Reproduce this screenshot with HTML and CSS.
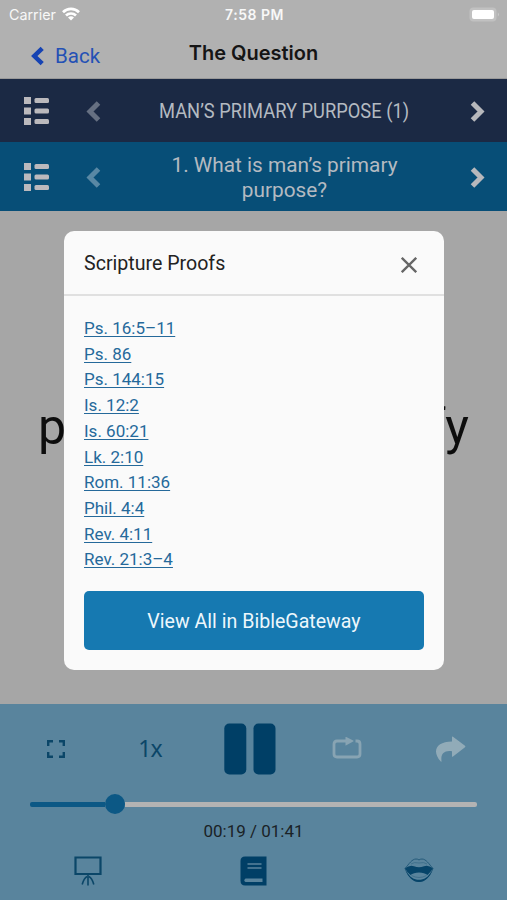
FILE: index.html
```html
<!DOCTYPE html>
<html lang="en">
<head>
    <meta charset="UTF-8">
    <meta name="viewport" content="width=device-width, initial-scale=1.0">
    <title>The Question</title>
    <link rel="stylesheet" href="styles.css">
</head>
<body>
    <div class="app">
        <div class="status-bar">
            <div class="status-left">
                <span>Carrier</span>
                <svg width="18" height="14" viewBox="0 0 18 14" fill="none" stroke="#fff" stroke-width="2.7">
                    <path d="M1 5.2a11.5 11.5 0 0 1 16 0"/>
                    <path d="M4 8.5a7.2 7.2 0 0 1 10 0"/>
                    <path d="M9 13.5L6 10.6a4.3 4.3 0 0 1 6 0z" fill="#fff" stroke="none"/>
                </svg>
            </div>
            <div class="status-time">7:58 PM</div>
            <div class="status-right">
                <svg width="31" height="15" viewBox="0 0 31 15">
                    <rect x="0.5" y="0.5" width="27" height="14" rx="4" fill="#c1c1c1"/>
                    <rect x="3" y="3" width="22" height="9" rx="2" fill="#fff"/>
                    <path d="M28.8 5.5q2.4 2 0 4z" fill="#c8c8c8"/>
                </svg>
            </div>
        </div>

        <header class="header">
            <a href="#" class="back-link">
                <svg width="13" height="20" viewBox="0 0 13 20" fill="none" stroke="#1643b3" stroke-width="4.5"><path d="M11.2 2.3L3.300 10l7.900 7.700"/></svg>
                <span>Back</span>
            </a>
            <h1 class="header-title">The Question</h1>
            <div></div>
        </header>

        <nav class="nav nav-chapter">
            <svg class="list-icon" width="25" height="28" viewBox="0 0 25 28"><use href="#list"/></svg>
            <svg class="arrow arrow-prev" width="16" height="23" viewBox="0 0 16 23"><path d="M12.500 3L4 11.500l8.500 8.500"/></svg>
            <div class="nav-title"><span class="condensed">MAN’S PRIMARY PURPOSE (1)</span></div>
            <svg class="arrow" width="16" height="23" viewBox="0 0 16 23"><path d="M3.500 3l8.500 8.500L3.500 20"/></svg>
        </nav>
        <nav class="nav nav-question">
            <svg class="list-icon" width="25" height="28" viewBox="0 0 25 28"><use href="#list"/></svg>
            <svg class="arrow arrow-prev" width="16" height="23" viewBox="0 0 16 23"><path d="M12.500 3L4 11.500l8.500 8.500"/></svg>
            <div class="nav-title">1. What is man’s primary<br>purpose?</div>
            <svg class="arrow" width="16" height="23" viewBox="0 0 16 23"><path d="M3.500 3l8.500 8.500L3.500 20"/></svg>
        </nav>

        <main class="content">
            <span>p</span><span>fy</span>
        </main>

        <section class="player">
            <div class="controls">
                <div class="control"><svg width="18" height="18" viewBox="0 0 18 18" fill="none" stroke="#0b4668" stroke-width="2.4"><path d="M1.2 6V1.2H6M12 1.2h4.8V6M16.8 12v4.8H12M6 16.8H1.2V12"/></svg></div>
                <div class="control"><span class="speed">1x</span></div>
                <div class="control"><svg width="52" height="52" viewBox="0 0 52 52" fill="#003f66"><rect x="0.3" y="0.5" width="22" height="51" rx="5"/><rect x="29.5" y="0.5" width="22" height="51" rx="5"/></svg></div>
                <div class="control">
                    <svg width="30" height="23" viewBox="0 0 30 23">
                        <path d="M14 4H5Q2 4 2 7v10q0 3 3 3h20q3 0 3-3V7q0-3-3-3h-1.500" fill="none" stroke="#88a4b3" stroke-width="2.8"/>
                        <path d="M13.500 0q0-.5.8 0l6.900 3.500q.8.500 0 1L14.300 8.200q-.8.500-.8 0z" fill="#88a4b3"/>
                    </svg>
                </div>
                <div class="control control-share"><svg width="31" height="26" viewBox="0 0 31 26"><path d="M17 1q0-1 1-.2L30 9.700q.8.800 0 1.500L18 20.500q-1 .8-1-.3v-5C9.500 14 5.500 17.500 6.500 25q.2 1-.7.500C-3.500 15.500 1 5.500 17 5.500z" fill="#91abb8"/></svg></div>
            </div>
            <div class="slider">
                <div class="slider-fill"></div>
                <div class="slider-thumb"></div>
                <div class="slider-rest"></div>
            </div>
            <div class="time">00:19 / 01:41</div>
            <div class="tabs">
                <svg width="28" height="30" viewBox="0 0 28 30" fill="none" stroke="#0b4668"><path d="M1.500 1.500h25v16.500h-25z" stroke-width="2.200"/><path d="M14 18v11.500M13 20.500q-3 1.500-4.800 8M15 20.500q3 1.500 4.800 8" stroke-width="1.600"/></svg>
                <svg width="27" height="30" viewBox="0 0 27 30">
                    <path d="M5 0.500h21.500v29H5q-4.500 0-4.500-5V5Q.5.5 5 .5z" fill="#003f66"/>
                    <path d="M7.500 8h14M7.500 12h14" stroke="#59849d" stroke-width="1.500"/>
                    <path d="M22.500 22.500H5.500q-2.500 2 0 3.500h17z" fill="#59849d"/>
                </svg>
                <svg width="30" height="25" viewBox="0 0 30 25">
                    <path d="M1 10.500C5 6 8 1 12 1q2 0 3 1 1-1 3-1c4 0 7 5 11 9.500C26 18 21 23.500 15 23.500S4 18 1 10.500z" fill="none" stroke="#245a7a" stroke-width="1"/>
                    <path d="M7 6q3-2.300 8-1 5-1.300 8 1" fill="none" stroke="#3a6b88" stroke-width=".8"/>
                    <path d="M1 10.300Q6 6.500 10 8.300q5 2 10 0Q24 6.500 29 10.300q-2.500 4-5.500 6.700Q20.500 14.500 15 14.500T6.500 17Q3 14.500 1 10.300z" fill="#064469"/>
                    <path d="M7.500 17.500Q15 21.500 22.500 17.500" fill="none" stroke="#3a6b88" stroke-width=".8"/>
                    <path d="M2 13c2 6 7 11 13 11s11-5 13-11c-4 6.500-8 8.800-13 8.800S6 19.500 2 13z" fill="#064469"/>
                </svg>
            </div>
        </section>

        <div class="modal">
            <div class="modal-header">
                <h2 class="modal-title">Scripture Proofs</h2>
                <svg width="16" height="16" viewBox="0 0 16 16" fill="none" stroke="#666" stroke-width="2.300"><path d="M.8.8l14.400 14.400M15.200.8L.8 15.200"/></svg>
            </div>
            <div class="modal-body">
                <ul class="proofs">
                    <li><a href="#">Ps. 16:5–11</a></li>
                    <li><a href="#">Ps. 86</a></li>
                    <li><a href="#">Ps. 144:15</a></li>
                    <li><a href="#">Is. 12:2</a></li>
                    <li><a href="#">Is. 60:21</a></li>
                    <li><a href="#">Lk. 2:10</a></li>
                    <li><a href="#">Rom. 11:36</a></li>
                    <li><a href="#">Phil. 4:4</a></li>
                    <li><a href="#">Rev. 4:11</a></li>
                    <li><a href="#">Rev. 21:3–4</a></li>
                </ul>
                <button class="view-btn">View All in BibleGateway</button>
            </div>
        </div>
    </div>

    <svg class="sprite" width="0" height="0">
        <symbol id="list" viewBox="0 0 25 28">
            <path d="M0 0h7v7H0zM0 10.500h7v7H0zM0 21h7v7H0z"/>
            <rect x="10.500" y="1" width="14.500" height="5" rx="1.500"/>
            <rect x="10.500" y="11.500" width="14.500" height="5" rx="1.500"/>
            <rect x="10.500" y="22" width="14.500" height="5" rx="1.500"/>
        </symbol>
    </svg>
</body>
</html>
```
FILE: styles.css
```css
* {
    margin: 0;
    padding: 0;
    box-sizing: border-box;
}

body {
    font-family: Roboto, 'Liberation Sans', sans-serif;
    background: #a6a6a6;
    overflow: hidden;
}

svg {
    display: block;
    flex: none;
}

.app {
    position: relative;
    width: 507px;
    height: 900px;
    display: flex;
    flex-direction: column;
}

.status-bar {
    height: 28px;
    padding: 0 7px 0 9px;
    background: #b1b1b1;
    color: #f8f8f8;
    font-family: Inter, sans-serif;
    font-size: 14px;
    display: grid;
    grid-template-columns: 1fr auto 1fr;
    align-items: center;
}

.status-left {
    display: flex;
    align-items: center;
    gap: 6px;
    font-size: 14.3px;
}

.status-time {
    font-weight: 600;
    letter-spacing: 0.5px;
}

.status-right {
    display: flex;
    justify-content: flex-end;
}

.header {
    height: 51px;
    padding: 0 30px;
    background: #b1b1b1;
    border-bottom: 1px solid #999;
    display: grid;
    grid-template-columns: 1fr auto 1fr;
    align-items: center;
}

.back-link {
    display: flex;
    align-items: center;
    gap: 11px;
    padding: 5px 0 0 1px;
    color: #2450b5;
    font-size: 20.5px;
    text-decoration: none;
}

.header-title {
    font-family: Inter, sans-serif;
    font-size: 20px;
    font-weight: 600;
    color: #151515;
    padding-bottom: 1px;
}

.nav {
    display: flex;
    align-items: center;
    padding: 1px 22px 0 24px;
    color: #b4bac1;
}

.nav-chapter {
    height: 63px;
    background: #1b2944;
}

.nav-question {
    height: 69px;
    background: #074e77;
}

.nav-question .nav-title {
    padding-top: 2px;
}

.list-icon {
    fill: #bbb9bd;
    margin-right: 37px;
}

.arrow {
    fill: none;
    stroke: #b7b8bc;
    stroke-width: 5;
}

.arrow-prev {
    stroke: #fff;
    opacity: 0.33;
}

.nav-title {
    flex: 1;
    text-align: center;
    font-size: 20.8px;
    line-height: 25px;
    white-space: nowrap;
    padding-right: 2px;
}

.condensed {
    display: inline-block;
    transform: scaleX(0.88);
}

.content {
    flex: 1;
    display: flex;
    align-items: center;
    justify-content: space-between;
    padding: 0 38px 62px 38px;
    font-size: 50px;
    color: #0d0d0d;
}

.player {
    height: 196px;
    background: #59849d;
    display: flex;
    flex-direction: column;
}

.controls {
    display: grid;
    grid-template-columns: 112px 76px 124px 70px 1fr;
    height: 89px;
    align-items: center;
}

.control {
    display: flex;
    justify-content: center;
}

.control-share {
    padding-left: 11px;
}

.speed {
    font-family: 'Noto Sans', sans-serif;
    font-size: 23px;
    line-height: 28px;
    font-weight: 400;
    color: #0b4668;
    letter-spacing: -1px;
    padding-bottom: 2px;
}

.slider {
    height: 20px;
    margin: 1px 30px 0;
    display: flex;
    align-items: center;
}

.slider-fill {
    width: 75px;
    height: 5px;
    border-radius: 2px 0 0 2px;
    background: #0c5885;
}

.slider-thumb {
    width: 20px;
    height: 20px;
    border-radius: 50%;
    background: #0c5885;
}

.slider-rest {
    flex: 1;
    height: 5px;
    border-radius: 0 2px 2px 0;
    background: #b3b3b3;
}

.time {
    margin-top: 7px;
    text-align: center;
    font-size: 17px;
    line-height: 20px;
    color: #1a2226;
}

.tabs {
    display: flex;
    align-items: center;
    justify-content: space-between;
    height: 59px;
    padding: 0 73px 0 74px;
}

.modal {
    position: absolute;
    left: 64px;
    top: 231px;
    width: 380px;
    height: 439px;
    background: #fafafa;
    border-radius: 10px;
}

.modal-header {
    height: 65px;
    padding: 5px 27px 0 20px;
    border-bottom: 2px solid #e0e0e0;
    display: flex;
    align-items: center;
    justify-content: space-between;
}

.modal-title {
    font-size: 19.6px;
    font-weight: 400;
    color: #222;
    padding-bottom: 3px;
}

.modal-body {
    padding: 20px 20px 0;
}

.proofs {
    list-style: none;
    font-size: 17px;
    line-height: 25.7px;
    height: 257px;
}

.proofs a {
    color: #25699a;
    text-underline-offset: 2px;
    text-decoration-thickness: 1px;
    text-decoration-skip-ink: none;
}

.view-btn {
    display: block;
    width: 100%;
    height: 59px;
    margin-top: 18px;
    padding-top: 2px;
    border: none;
    border-radius: 5px;
    background: #1679b1;
    color: #edf7fc;
    font-family: Roboto, sans-serif;
    font-size: 19.6px;
}

.sprite {
    position: absolute;
}
```
